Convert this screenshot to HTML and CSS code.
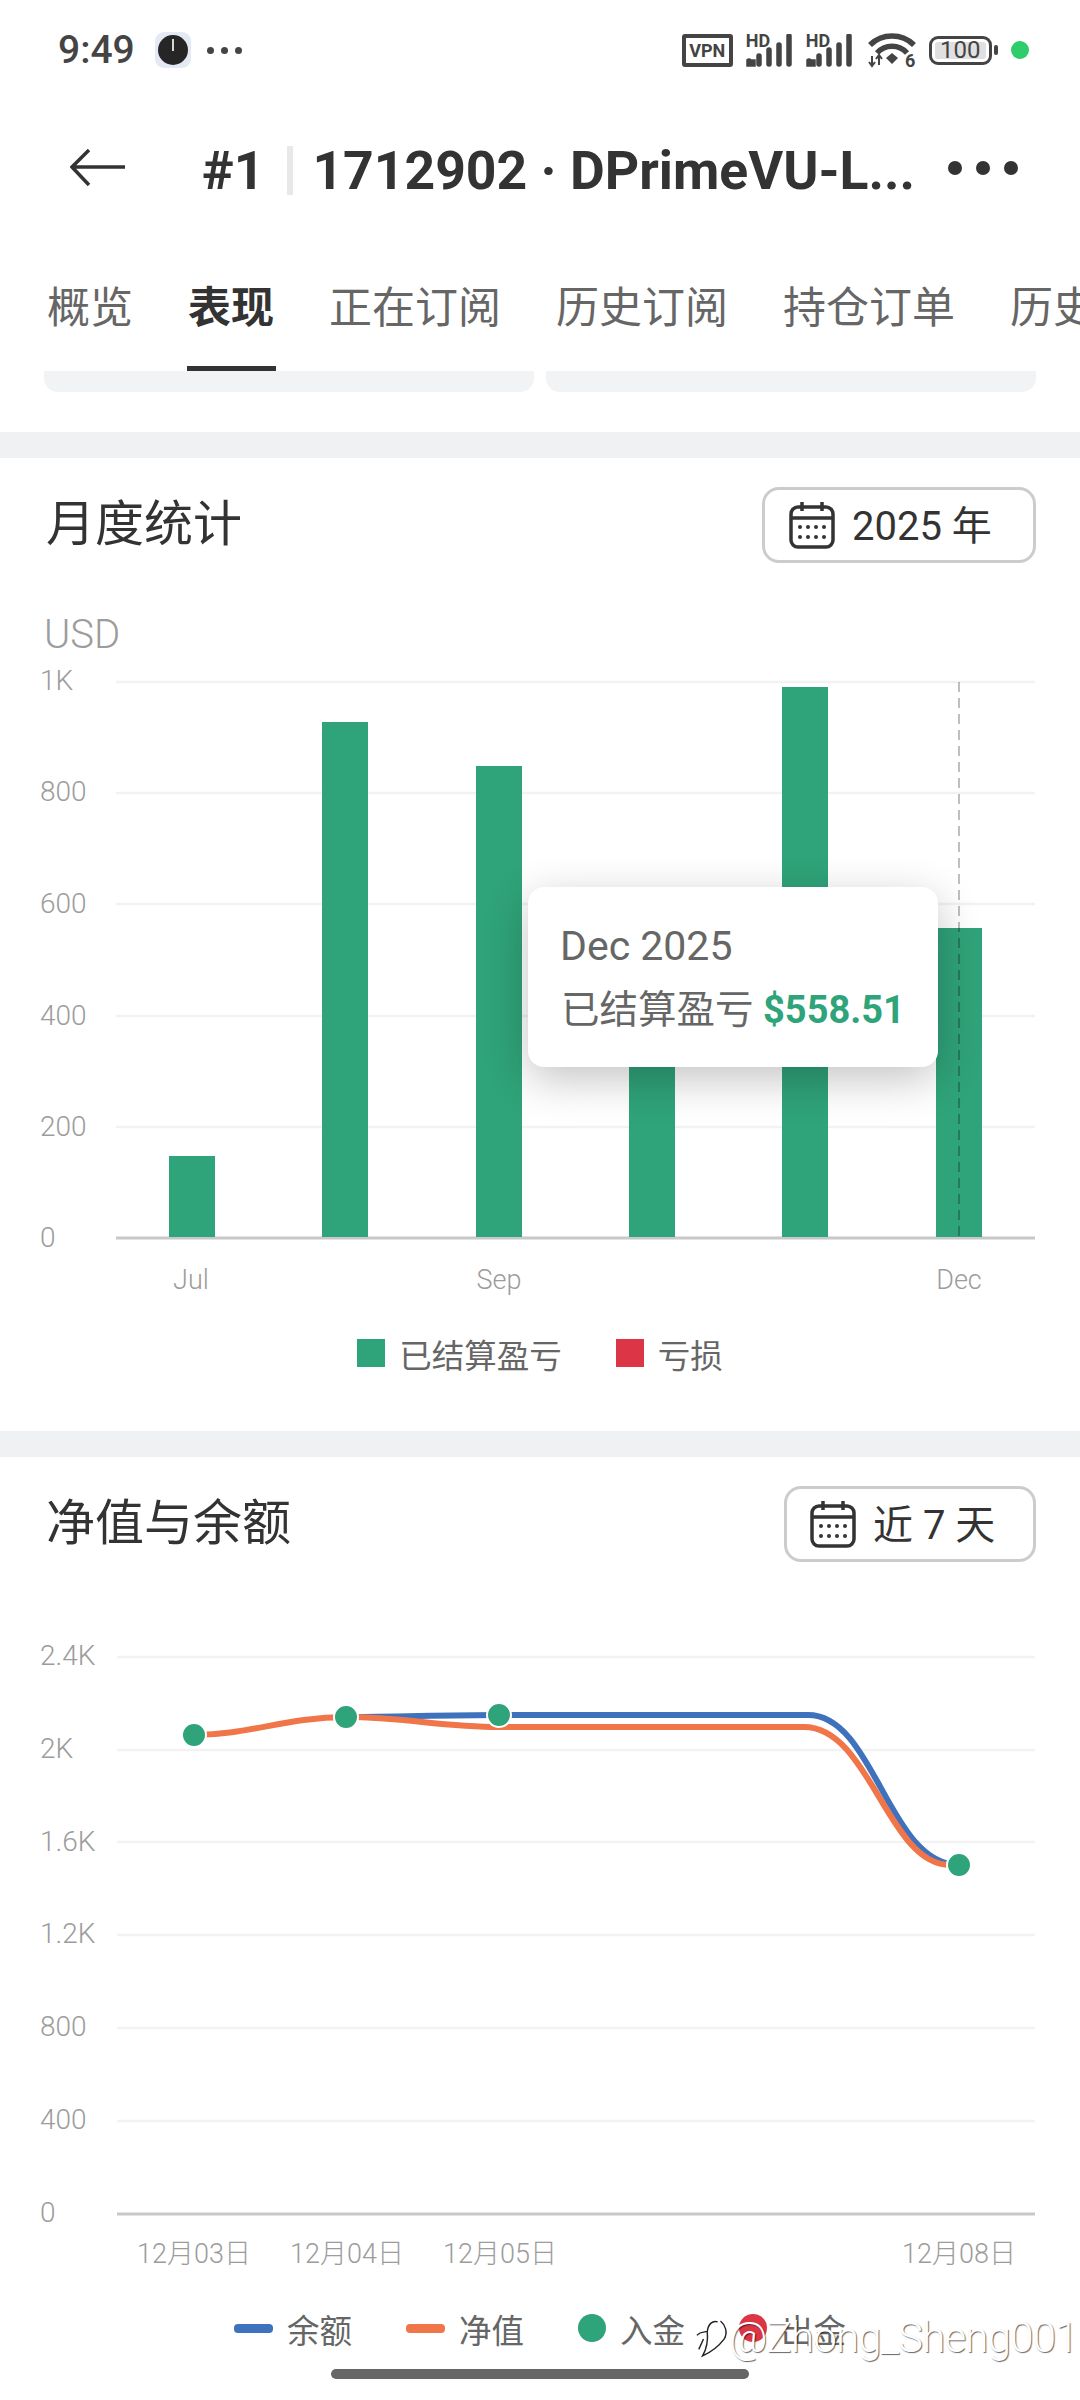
FILE: index.html
```html
<!DOCTYPE html>
<html lang="zh">

<head>
  <meta charset="UTF-8">
  <title>#1 1712902 - 表现</title>
  <link rel="stylesheet" href="styles.css">
</head>

<body>
  <svg class="defs" width="0" height="0">
    <symbol id="cal" viewBox="0 0 46 48">
      <rect x="2" y="6" width="42" height="40" rx="7" fill="none" stroke="#333" stroke-width="3.5" />
      <path d="M13 1v9M33 1v9M2 17h42" fill="none" stroke="#333" stroke-width="3.5" />
      <g fill="#333">
        <circle cx="11" cy="26" r="2" /><circle cx="19" cy="26" r="2" /><circle cx="27" cy="26" r="2" /><circle cx="35" cy="26" r="2" />
        <circle cx="11" cy="36" r="2" /><circle cx="19" cy="36" r="2" /><circle cx="27" cy="36" r="2" /><circle cx="35" cy="36" r="2" />
      </g>
    </symbol>
    <symbol id="signal" viewBox="0 0 50 33">
      <path d="M3 28h4v2H3zM13 22v8M23 16v14M33 11v19M43 2v28M3 27v3" fill="none" stroke="#444" stroke-width="5.5" stroke-linecap="round" />
    </symbol>
  </svg>

  <div class="status">
    <span class="time">9:49</span>
    <span class="clock"><i class="hand"></i></span>
    <span class="status-dots"><i></i><i></i><i></i></span>
    <div class="status-right">
      <span class="vpn">VPN</span>
      <span class="sig"><b>HD</b><svg width="50" height="33"><use href="#signal" /></svg></span>
      <span class="sig"><b>HD</b><svg width="50" height="33"><use href="#signal" /></svg></span>
      <svg class="wifi" width="48" height="42" viewBox="0 0 48 42">
        <path d="M2 13C14 1 34 1 46 13M9 21C17 12 31 12 39 21" fill="none" stroke="#444" stroke-width="5.5" />
        <path d="M18 26l6-5 6 5-6 6z" fill="#444" />
        <path d="M4 24v9M1 30l3 4 3-4M11 33v-9M8 27l3-4 3 4" fill="none" stroke="#444" stroke-width="2" />
        <text x="37" y="35" class="wifi-six">6</text>
      </svg>
      <span class="battery"><span class="battery-fill">100</span></span>
      <i class="battery-cap"></i>
      <i class="green-dot"></i>
    </div>
  </div>

  <div class="nav">
    <svg class="back" width="56" height="38" viewBox="0 0 56 38">
      <path d="M55 18H3M19 1L2 18l17 18" fill="none" stroke="#333" stroke-width="3.5" />
    </svg>
    <span class="nav-no">#1</span>
    <i class="nav-sep"></i>
    <span class="nav-title">1712902 · DPrimeVU-L...</span>
    <span class="nav-more"><i></i><i></i><i></i></span>
  </div>

  <div class="tabs">
    <span class="tab">概览</span>
    <span class="tab active">表现</span>
    <span class="tab">正在订阅</span>
    <span class="tab">历史订阅</span>
    <span class="tab">持仓订单</span>
    <span class="tab">历史订单</span>
  </div>

  <div class="stubs">
    <div class="stub"></div>
    <div class="stub"></div>
  </div>

  <div class="gap"></div>

  <section class="panel panel-month">
    <div class="panel-head">
      <h2>月度统计</h2>
      <div class="picker picker-year"><svg width="46" height="48"><use href="#cal" /></svg><span>2025 年</span></div>
    </div>
    <div class="usd">USD</div>
    <svg class="chart" width="1080" height="650" viewBox="0 660 1080 650">
      <g class="grid">
        <path d="M116 682H1035M116 793H1035M116 904H1035M116 1016H1035M116 1127H1035" />
      </g>
      <path class="axis" d="M116 1238H1035" />
      <g class="ylabels">
        <text x="40" y="690">1K</text>
        <text x="40" y="801">800</text>
        <text x="40" y="913">600</text>
        <text x="40" y="1025">400</text>
        <text x="40" y="1136">200</text>
        <text x="40" y="1247">0</text>
      </g>
      <g fill="#2fa379">
        <rect x="169" y="1156" width="46" height="81" />
        <rect x="322" y="722" width="46" height="515" />
        <rect x="476" y="766" width="46" height="471" />
        <rect x="629" y="950" width="46" height="287" />
        <rect x="782" y="687" width="46" height="550" />
        <rect x="936" y="928" width="46" height="309" />
      </g>
      <path class="cursor" d="M959 682V1238" />
      <g class="xlabels">
        <text x="191" y="1289">Jul</text>
        <text x="499" y="1289">Sep</text>
        <text x="959" y="1289">Dec</text>
      </g>
    </svg>
    <div class="legend">
      <span class="leg"><i class="sq green"></i>已结算盈亏</span>
      <span class="leg"><i class="sq red"></i>亏损</span>
    </div>
    <div class="tip">
      <div class="tip-date">Dec 2025</div>
      <div class="tip-row">已结算盈亏 <b>$558.51</b></div>
    </div>
  </section>

  <div class="gap"></div>

  <section class="panel">
    <div class="panel-head">
      <h2>净值与余额</h2>
      <div class="picker picker-days"><svg width="46" height="48"><use href="#cal" /></svg><span>近 7 天</span></div>
    </div>
    <svg class="chart chart-equity" width="1080" height="670" viewBox="0 1620 1080 670">
      <g class="grid">
        <path d="M117 1657H1035M117 1750H1035M117 1842H1035M117 1935H1035M117 2028H1035M117 2121H1035" />
      </g>
      <path class="axis" d="M117 2214H1035" />
      <g class="ylabels">
        <text x="40" y="1665">2.4K</text>
        <text x="40" y="1758">2K</text>
        <text x="40" y="1851">1.6K</text>
        <text x="40" y="1943">1.2K</text>
        <text x="40" y="2036">800</text>
        <text x="40" y="2129">400</text>
        <text x="40" y="2222">0</text>
      </g>
      <path class="line blue" d="M347 1717C400 1717 440 1715 500 1715L808 1715C875 1715 888 1865 959 1865" />
      <path class="line orange" d="M194 1735C250 1735 285 1717 347 1717C405 1717 440 1727 500 1727L804 1727C870 1727 888 1865 950 1865" />
      <g class="dots">
        <circle cx="194" cy="1735" r="12" />
        <circle cx="346" cy="1717" r="12" />
        <circle cx="499" cy="1715" r="12" />
        <circle cx="959" cy="1865" r="12" />
      </g>
      <g class="xlabels xdates">
        <text x="194" y="2263">12月03日</text>
        <text x="347" y="2263">12月04日</text>
        <text x="500" y="2263">12月05日</text>
        <text x="959" y="2263">12月08日</text>
      </g>
    </svg>
    <div class="legend legend-equity">
      <span class="leg"><i class="pill blue-bg"></i>余额</span>
      <span class="leg"><i class="pill orange-bg"></i>净值</span>
      <span class="leg"><i class="round green"></i>入金</span>
      <span class="leg"><i class="round red"></i>出金</span>
    </div>
  </section>

  <!-- watermark sits over the legend -->
  <div class="mark">
    <svg width="34" height="42" viewBox="0 0 36 42">
      <path d="M2 18C6 14 10 15 13 14C14 6 19 2 24 4M13 14C14 24 12 33 8 40C17 36 25 30 31 22C35 15 32 7 27 3M4 33L9 22" fill="none" stroke="#222" stroke-width="1.5" />
    </svg>
    <span>@Zhong_Sheng001</span>
  </div>
  <div class="home-bar"></div>
</body>

</html>
```

FILE: styles.css
```css
* {
  box-sizing: border-box;
}

html,
body {
  margin: 0;
  padding: 0;
}

body {
  position: relative;
  width: 1080px;
  height: 2400px;
  overflow: hidden;
  background: #ffffff;
  color: #333333;
  font-family: Roboto, "Noto Sans CJK SC", sans-serif;
}

.defs {
  position: absolute;
}

i {
  display: block;
}

/* status bar */
.status {
  display: flex;
  align-items: center;
  height: 100px;
  padding-left: 58px;
}

.time {
  font-size: 39px;
  font-weight: 500;
  color: #444444;
}

.clock {
  position: relative;
  width: 36px;
  height: 36px;
  margin-left: 20px;
  border-radius: 9px;
  background: #e3eaf3;
}

.clock::before {
  content: "";
  display: block;
  width: 30px;
  height: 30px;
  margin: 3px;
  border-radius: 50%;
  background: #262626;
}

.hand {
  position: absolute;
  left: 17px;
  top: 7px;
  width: 2px;
  height: 12px;
  background: #d8d8d8;
}

.status-dots {
  display: flex;
  gap: 7px;
  margin-left: 16px;
}

.status-dots i {
  width: 7px;
  height: 7px;
  border-radius: 50%;
  background: #444444;
}

.status-right {
  display: flex;
  align-items: center;
  margin-left: 440px;
}

.vpn {
  width: 51px;
  height: 33px;
  border: 4px solid #444444;
  border-radius: 3px;
  font-size: 18px;
  font-weight: 700;
  line-height: 25px;
  text-align: center;
  color: #444444;
}

.sig {
  position: relative;
  width: 50px;
  height: 33px;
  margin-left: 13px;
}

.sig+.sig {
  margin-left: 10px;
}

.sig svg {
  display: block;
}

.sig b {
  position: absolute;
  left: 0;
  top: -2px;
  font-size: 18px;
  line-height: 18px;
  color: #444444;
}

.wifi {
  margin: 6px 0 0 12px;
}

.wifi-six {
  font-size: 18px;
  font-weight: 700;
  fill: #444444;
}

.battery {
  width: 63px;
  height: 29px;
  margin-left: 13px;
  padding: 3px;
  border: 3px solid #444444;
  border-radius: 9px;
}

.battery-fill {
  display: block;
  height: 17px;
  border-radius: 3px;
  background: #e0e0e0;
  font-size: 24px;
  line-height: 17px;
  text-align: center;
  color: #444444;
}

.battery-cap {
  width: 4px;
  height: 10px;
  margin-left: 2px;
  border-radius: 2px;
  background: #444444;
}

.green-dot {
  width: 18px;
  height: 18px;
  margin-left: 13px;
  border-radius: 50%;
  background: #2ecc6b;
}

/* title row */
.nav {
  display: flex;
  align-items: center;
  height: 136px;
  padding-left: 70px;
}

.back {
  flex: none;
}

.nav-no,
.nav-title {
  margin-top: 5px;
  font-size: 53.5px;
  font-weight: 700;
  white-space: nowrap;
  color: #333333;
}

.nav-no {
  margin-left: 76px;
}

.nav-sep {
  width: 6px;
  height: 49px;
  margin: 5px 19px 0 23px;
  background: #e8e8e8;
}

.nav-more {
  display: flex;
  gap: 14px;
  position: absolute;
  left: 948px;
  top: 161px;
}

.nav-more i {
  width: 14px;
  height: 14px;
  border-radius: 50%;
  background: #333333;
}

/* tabs */
.tabs {
  display: flex;
  gap: 55px;
  height: 135px;
  padding: 40px 0 0 47px;
  overflow: hidden;
  white-space: nowrap;
}

.tab {
  flex: none;
  height: 95px;
  font-size: 43px;
  line-height: 64px;
  color: #666666;
}

.tab.active {
  position: relative;
  font-weight: 700;
  color: #333333;
}

.tab.active::after {
  content: "";
  position: absolute;
  left: -1px;
  right: -2px;
  bottom: 0;
  height: 5px;
  background: #333333;
}

.stubs {
  display: flex;
  gap: 12px;
  height: 61px;
  padding: 0 44px;
}

.stub {
  flex: 1;
  height: 21px;
  border-radius: 0 0 14px 14px;
  background: #f2f3f5;
}

.gap {
  height: 26px;
  background: #f0f1f3;
}

/* chart panels */
.panel {
  position: relative;
}

.panel-month {
  height: 973px;
}

.panel-head {
  display: flex;
  align-items: center;
  justify-content: space-between;
  padding: 29px 44px 0 46px;
}

h2 {
  margin: 0;
  font-size: 49px;
  font-weight: 400;
  line-height: 60px;
  color: #333333;
}

.picker {
  display: flex;
  align-items: center;
  gap: 17px;
  height: 76px;
  border: 3px solid #cccccc;
  border-radius: 17px;
  font-size: 40px;
  white-space: nowrap;
  color: #333333;
}

.picker span {
  margin-bottom: 4px;
}

.picker-year {
  width: 274px;
  padding-left: 24px;
}

.picker-days {
  width: 252px;
  padding-left: 23px;
}

.usd {
  margin: 52px 0 5px 44px;
  font-size: 40px;
  font-weight: 300;
  line-height: 40px;
  color: #9c9c9c;
}

.chart {
  display: block;
}

.chart-equity {
  margin-top: 58px;
}

.grid path {
  fill: none;
  stroke: #f2f2f2;
  stroke-width: 2.5;
}

.axis {
  fill: none;
  stroke: #c8c8c8;
  stroke-width: 3;
}

.ylabels text {
  font-size: 28px;
  font-weight: 300;
  fill: #9c9c9c;
}

.xlabels text {
  font-size: 27px;
  font-weight: 300;
  text-anchor: middle;
  fill: #9c9c9c;
}

.xdates text {
  font-size: 27px;
}

.cursor {
  fill: none;
  stroke: #000000;
  stroke-opacity: 0.25;
  stroke-width: 2;
  stroke-dasharray: 10 6;
}

.line {
  fill: none;
  stroke-width: 6;
}

.line.blue {
  stroke: #3f72bd;
}

.line.orange {
  stroke: #f0764a;
}

.dots circle {
  fill: #2fa379;
  stroke: #ffffff;
  stroke-width: 2;
}

.legend {
  display: flex;
  justify-content: center;
  gap: 54px;
  margin-top: 23px;
}

.legend-equity {
  margin-top: 18px;
}

.leg {
  display: flex;
  align-items: center;
  gap: 14px;
  height: 40px;
  font-size: 32.5px;
  color: #666666;
}

.sq {
  width: 28px;
  height: 28px;
}

.round {
  width: 28px;
  height: 28px;
  border-radius: 50%;
}

.pill {
  width: 39px;
  height: 9px;
  border-radius: 4px;
}

.green {
  background: #2fa379;
}

.red {
  background: #dc3545;
}

.blue-bg {
  background: #3f72bd;
}

.orange-bg {
  background: #f0764a;
}

.tip {
  position: absolute;
  left: 528px;
  top: 429px;
  width: 410px;
  height: 180px;
  padding: 36px 0 0 32px;
  border-radius: 16px;
  background: #ffffff;
  box-shadow: 0 12px 44px rgba(0, 0, 0, 0.24);
  color: #666666;
}

.tip-date {
  font-size: 41px;
  line-height: 46px;
}

.tip-row {
  margin-top: 18px;
  padding-left: 1px;
  font-size: 38.5px;
  line-height: 46px;
  white-space: nowrap;
}

.tip-row b {
  font-size: 38px;
  color: #2fa379;
}

/* overlays at the page bottom */
.mark {
  position: absolute;
  left: 695px;
  top: 2313px;
  display: flex;
  align-items: center;
  font-size: 42px;
  font-weight: 300;
  letter-spacing: -0.8px;
  white-space: nowrap;
  color: #ffffff;
  text-shadow: 1px 1px 1px rgba(0, 0, 0, 0.6);
}

.home-bar {
  position: absolute;
  left: 331px;
  top: 2369px;
  width: 418px;
  height: 10px;
  border-radius: 5px;
  background: #666666;
}
```
